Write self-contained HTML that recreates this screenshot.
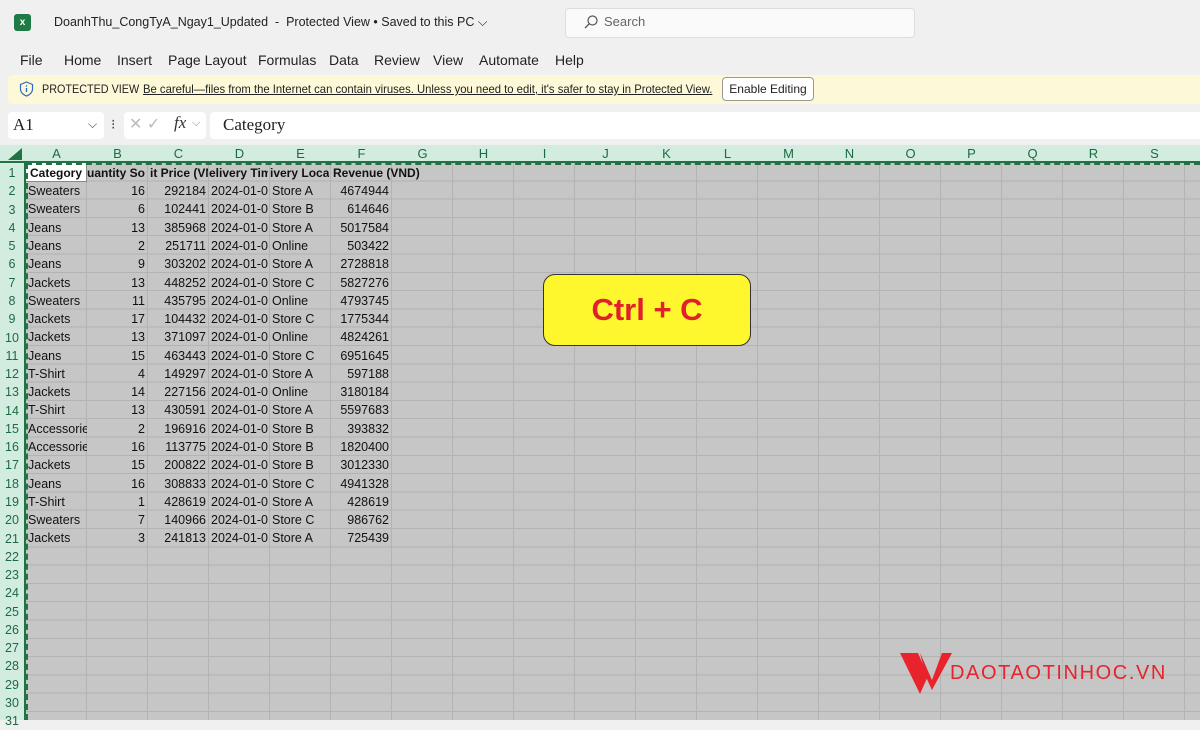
<!DOCTYPE html>
<html><head><meta charset="utf-8"><style>
*{box-sizing:border-box;margin:0;padding:0}
body{width:1200px;height:720px;overflow:hidden;background:#f0f0f0;font-family:"Segoe UI","Liberation Sans",sans-serif;position:relative;color:#222}
.abs{position:absolute}
.menu span{position:absolute;top:52px;font-size:14px;color:#222}
.pv{left:8px;top:75px;width:1192px;height:29px;background:#fdf8d8;border-radius:4px 0 0 4px}
.grid{left:26px;top:163px;width:1174px;height:557px;background-color:#c6c6c6;
background-image:repeating-linear-gradient(90deg,transparent 0 60px,#b3b3b3 60px 61px),repeating-linear-gradient(180deg,transparent 0 17.3px,#b3b3b3 17.3px 18.3px)}
.colh{left:0;top:145px;width:1200px;height:18px;background:#d3ece0;border-bottom:2px solid #217346}
.colh span{position:absolute;top:1px;width:61px;text-align:center;font-size:13px;color:#1d6a42}
.rowh{left:0;top:163px;width:26px;height:557px;background:#d3ece0;border-right:2px solid #217346}
.rowh span{position:absolute;left:0;width:24px;text-align:center;font-size:12.5px;color:#1d6a42;line-height:18px}
.r{position:absolute;left:26px;height:18px;width:400px;font-family:"Liberation Sans",sans-serif;font-size:12.5px;line-height:18px;color:#111}
.r span{position:absolute;white-space:nowrap;overflow:hidden}
.a{left:2px;width:59px}.b{left:61px;width:58px;text-align:right}.c{left:122px;width:58px;text-align:right}
.d{left:185px;width:59px}.e{left:246px;width:59px}.f{left:305px;width:58px;text-align:right}
.h span{font-weight:bold;font-size:12px}
</style></head><body>
<div class="abs" style="left:14px;top:14px;width:17px;height:17px;background:#1f7a45;border-radius:3px;color:#fff;font-size:10px;font-weight:bold;text-align:center;line-height:17px">x</div>
<div class="abs" style="left:54px;top:15px;font-size:12.5px;color:#222">DoanhThu_CongTyA_Ngay1_Updated &nbsp;-&nbsp; Protected View • Saved to this PC ⌵</div>
<div class="abs" style="left:565px;top:8px;width:350px;height:30px;background:#fafafa;border:1px solid #ddd;border-radius:4px"></div>
<svg class="abs" style="left:583px;top:14px" width="16" height="16" viewBox="0 0 16 16"><circle cx="9.5" cy="6.5" r="4.5" fill="none" stroke="#555" stroke-width="1.2"/><path d="M6.3 9.7L2 14" stroke="#555" stroke-width="1.3"/></svg>
<div class="abs" style="left:604px;top:14px;font-size:13px;color:#666">Search</div>
<div class="menu">
<span style="left:20px">File</span><span style="left:64px">Home</span><span style="left:117px">Insert</span><span style="left:168px">Page Layout</span><span style="left:258px">Formulas</span><span style="left:329px">Data</span><span style="left:374px">Review</span><span style="left:433px">View</span><span style="left:479px">Automate</span><span style="left:555px">Help</span>
</div>
<div class="abs pv"></div>
<svg class="abs" style="left:19px;top:81px" width="15" height="16" viewBox="0 0 15 16"><path d="M7.5 1L13.5 3.5V8c0 3.5-3 6-6 7C4.5 14 1.5 11.5 1.5 8V3.5z" fill="none" stroke="#2b6cc4" stroke-width="1.2"/><path d="M7.5 7v4" stroke="#2b6cc4" stroke-width="1.4"/><circle cx="7.5" cy="5" r=".8" fill="#2b6cc4"/></svg>
<div class="abs" style="left:42px;top:82px;font-size:12px;color:#222;white-space:nowrap;transform:scaleX(0.9);transform-origin:left">PROTECTED VIEW</div>
<div class="abs" style="left:143px;top:82px;font-size:12px;color:#222;text-decoration:underline;transform:scaleX(0.94);transform-origin:left;white-space:nowrap">Be careful—files from the Internet can contain viruses. Unless you need to edit, it's safer to stay in Protected View.</div>
<div class="abs" style="left:722px;top:77px;width:92px;height:24px;background:#fff;border:1px solid #999;border-radius:4px;font-size:12px;text-align:center;line-height:22px">Enable Editing</div>
<div class="abs" style="left:8px;top:112px;width:96px;height:27px;background:#fff;border-radius:4px"></div>
<div class="abs" style="left:13px;top:115px;font-family:'Liberation Serif',serif;font-size:17px">A1</div>
<div class="abs" style="left:88px;top:117px;font-size:12px;color:#444">⌵</div>
<div class="abs" style="left:111px;top:116px;font-size:14px;color:#444">⁝</div>
<div class="abs" style="left:124px;top:112px;width:82px;height:27px;background:#fff;border-radius:4px"></div>
<div class="abs" style="left:129px;top:114px;font-size:16px;color:#bbb">✕ ✓</div>
<div class="abs" style="left:174px;top:113px;font-family:'Liberation Serif',serif;font-style:italic;font-size:17px;color:#333">fx</div>
<div class="abs" style="left:192px;top:117px;font-size:11px;color:#888">⌵</div>
<div class="abs" style="left:210px;top:112px;width:990px;height:27px;background:#fff;border-radius:4px 0 0 4px"></div>
<div class="abs" style="left:223px;top:115px;font-family:'Liberation Serif',serif;font-size:17px">Category</div>
<div class="abs grid"></div>
<div class="abs" style="left:26px;top:163px;width:61px;height:19px;background:#fff;border-right:1px solid #888;border-bottom:1px solid #888"></div>
<div class="abs" style="left:26px;top:163px;width:1174px;height:557px;border-left:2px dashed #217346;border-top:2px dashed #217346"></div>
<div class="abs colh">
<span style="left:26px">A</span><span style="left:87px">B</span><span style="left:148px">C</span><span style="left:209px">D</span><span style="left:270px">E</span><span style="left:331px">F</span><span style="left:392px">G</span><span style="left:453px">H</span><span style="left:514px">I</span><span style="left:575px">J</span><span style="left:636px">K</span><span style="left:697px">L</span><span style="left:758px">M</span><span style="left:819px">N</span><span style="left:880px">O</span><span style="left:941px">P</span><span style="left:1002px">Q</span><span style="left:1063px">R</span><span style="left:1124px">S</span>
</div>
<div class="abs" style="left:8px;top:148px;width:0;height:0;border-left:14px solid transparent;border-bottom:12px solid #217346"></div>
<div class="abs rowh">
<span style="top:1px">1</span><span style="top:19px">2</span><span style="top:38px">3</span><span style="top:56px">4</span><span style="top:74px">5</span><span style="top:92px">6</span><span style="top:111px">7</span><span style="top:129px">8</span><span style="top:147px">9</span><span style="top:166px">10</span><span style="top:184px">11</span><span style="top:202px">12</span><span style="top:220px">13</span><span style="top:239px">14</span><span style="top:257px">15</span><span style="top:275px">16</span><span style="top:293px">17</span><span style="top:312px">18</span><span style="top:330px">19</span><span style="top:348px">20</span><span style="top:367px">21</span><span style="top:385px">22</span><span style="top:403px">23</span><span style="top:421px">24</span><span style="top:440px">25</span><span style="top:458px">26</span><span style="top:476px">27</span><span style="top:494px">28</span><span style="top:513px">29</span><span style="top:531px">30</span><span style="top:549px">31</span>
</div>
<div class="r h" style="top:164px"><span class="a" style="left:4px">Category</span><span class="b" style="text-align:left">uantity Sol</span><span class="c" style="text-align:left;left:124px">it Price (VN</span><span class="d" style="left:183px">elivery Tim</span><span class="e" style="left:244px">ivery Locat</span><span class="f" style="text-align:left;left:307px;width:120px">Revenue (VND)</span></div>
<div class="r" style="top:182px"><span class="a">Sweaters</span><span class="b">16</span><span class="c">292184</span><span class="d">2024-01-0</span><span class="e">Store A</span><span class="f">4674944</span></div>
<div class="r" style="top:200px"><span class="a">Sweaters</span><span class="b">6</span><span class="c">102441</span><span class="d">2024-01-0</span><span class="e">Store B</span><span class="f">614646</span></div>
<div class="r" style="top:219px"><span class="a">Jeans</span><span class="b">13</span><span class="c">385968</span><span class="d">2024-01-0</span><span class="e">Store A</span><span class="f">5017584</span></div>
<div class="r" style="top:237px"><span class="a">Jeans</span><span class="b">2</span><span class="c">251711</span><span class="d">2024-01-0</span><span class="e">Online</span><span class="f">503422</span></div>
<div class="r" style="top:255px"><span class="a">Jeans</span><span class="b">9</span><span class="c">303202</span><span class="d">2024-01-0</span><span class="e">Store A</span><span class="f">2728818</span></div>
<div class="r" style="top:274px"><span class="a">Jackets</span><span class="b">13</span><span class="c">448252</span><span class="d">2024-01-0</span><span class="e">Store C</span><span class="f">5827276</span></div>
<div class="r" style="top:292px"><span class="a">Sweaters</span><span class="b">11</span><span class="c">435795</span><span class="d">2024-01-0</span><span class="e">Online</span><span class="f">4793745</span></div>
<div class="r" style="top:310px"><span class="a">Jackets</span><span class="b">17</span><span class="c">104432</span><span class="d">2024-01-0</span><span class="e">Store C</span><span class="f">1775344</span></div>
<div class="r" style="top:328px"><span class="a">Jackets</span><span class="b">13</span><span class="c">371097</span><span class="d">2024-01-0</span><span class="e">Online</span><span class="f">4824261</span></div>
<div class="r" style="top:347px"><span class="a">Jeans</span><span class="b">15</span><span class="c">463443</span><span class="d">2024-01-0</span><span class="e">Store C</span><span class="f">6951645</span></div>
<div class="r" style="top:365px"><span class="a">T-Shirt</span><span class="b">4</span><span class="c">149297</span><span class="d">2024-01-0</span><span class="e">Store A</span><span class="f">597188</span></div>
<div class="r" style="top:383px"><span class="a">Jackets</span><span class="b">14</span><span class="c">227156</span><span class="d">2024-01-0</span><span class="e">Online</span><span class="f">3180184</span></div>
<div class="r" style="top:401px"><span class="a">T-Shirt</span><span class="b">13</span><span class="c">430591</span><span class="d">2024-01-0</span><span class="e">Store A</span><span class="f">5597683</span></div>
<div class="r" style="top:420px"><span class="a">Accessorie</span><span class="b">2</span><span class="c">196916</span><span class="d">2024-01-0</span><span class="e">Store B</span><span class="f">393832</span></div>
<div class="r" style="top:438px"><span class="a">Accessorie</span><span class="b">16</span><span class="c">113775</span><span class="d">2024-01-0</span><span class="e">Store B</span><span class="f">1820400</span></div>
<div class="r" style="top:456px"><span class="a">Jackets</span><span class="b">15</span><span class="c">200822</span><span class="d">2024-01-0</span><span class="e">Store B</span><span class="f">3012330</span></div>
<div class="r" style="top:475px"><span class="a">Jeans</span><span class="b">16</span><span class="c">308833</span><span class="d">2024-01-0</span><span class="e">Store C</span><span class="f">4941328</span></div>
<div class="r" style="top:493px"><span class="a">T-Shirt</span><span class="b">1</span><span class="c">428619</span><span class="d">2024-01-0</span><span class="e">Store A</span><span class="f">428619</span></div>
<div class="r" style="top:511px"><span class="a">Sweaters</span><span class="b">7</span><span class="c">140966</span><span class="d">2024-01-0</span><span class="e">Store C</span><span class="f">986762</span></div>
<div class="r" style="top:529px"><span class="a">Jackets</span><span class="b">3</span><span class="c">241813</span><span class="d">2024-01-0</span><span class="e">Store A</span><span class="f">725439</span></div>
<div class="abs" style="left:543px;top:274px;width:208px;height:72px;background:#fff72e;border:1px solid #333;border-radius:12px;text-align:center;line-height:70px;font-family:'Liberation Sans',sans-serif;font-weight:bold;font-size:31px;color:#e0202a">Ctrl + C</div>
<svg class="abs" style="left:898px;top:650px" width="56" height="48" viewBox="0 0 56 48"><path d="M2 3H20L30 26L22 44z" fill="#e8232b"/><path d="M22 3L34 30L44 3H54L34 40L28 27z" fill="#e8232b"/><path d="M22 3L30 22L26 12z" fill="#b01820"/></svg>
<div class="abs" style="left:950px;top:662px;font-family:'Liberation Sans',sans-serif;font-size:20px;color:#e8232b;letter-spacing:1.6px">DAOTAOTINHOC.VN</div>
</body></html>
